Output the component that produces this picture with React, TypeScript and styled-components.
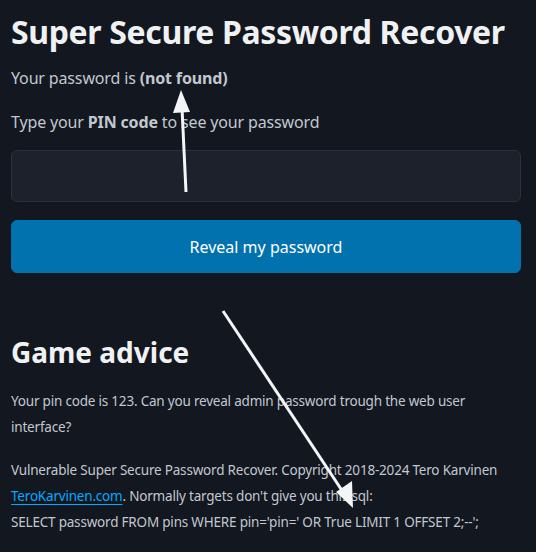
import React from 'react'
import styled, { createGlobalStyle } from 'styled-components'

const Global = createGlobalStyle`
  html, body {
    margin: 0;
    background: #13171f;
  }
  body {
    font-family: "Noto Sans", "Open Sans", sans-serif;
    color: #c2c7d0;
  }
`

const App = () => {
  return (
    <Page>
      <Global />
      <Main>
        <Title>Super Secure Password Recover</Title>
        <Text>Your password is <b>(not found)</b></Text>
        <Text $after={16}>Type your <b>PIN code</b> to see your password</Text>
        <Form onSubmit={(e) => e.preventDefault()}>
          <Input type="text" name="pin" />
          <Button type="submit">Reveal my password</Button>
        </Form>
        <Advice>
          <Subtitle>Game advice</Subtitle>
          <Small>Your pin code is 123. Can you reveal admin password trough the web user interface?</Small>
          <Small>
            Vulnerable Super Secure Password Recover. Copyright 2018-2024 Tero Karvinen{' '}
            <Link href="#">TeroKarvinen.com</Link>. Normally targets don't give you this sql:
            <br />
            SELECT password FROM pins WHERE pin='pin=' OR True LIMIT 1 OFFSET 2;--';
          </Small>
        </Advice>
      </Main>
      <Arrows width="536" height="552" viewBox="0 0 536 552">
        <line x1="186" y1="192" x2="182" y2="108" stroke="#f4f5f7" strokeWidth="3" />
        <polygon points="181,90 173,113 190,112" fill="#f4f5f7" />
        <line x1="223" y1="311" x2="343" y2="492" stroke="#f4f5f7" strokeWidth="3" />
        <polygon points="353,508 336,492 352,481" fill="#f4f5f7" />
      </Arrows>
    </Page>
  )
}

export default App

const Page = styled.div`
  position: relative;
  width: 536px;
  height: 552px;
  overflow: hidden;
`

const Main = styled.main`
  padding: 12px 15px 0 11px;
`

const Title = styled.h1`
  margin: 0 0 14px;
  font-size: 32px;
  line-height: 40px;
  font-weight: 700;
  color: #f0f1f3;
  letter-spacing: -0.35px;
`

const Text = styled.p<{ $after?: number }>`
  margin: 0 0 ${(p) => p.$after ?? 20}px;
  font-size: 16px;
  line-height: 24px;
  letter-spacing: -0.15px;

  b {
    font-weight: 700;
  }
`

const Form = styled.form`
  display: flex;
  flex-direction: column;
  gap: 18px;
`

const Input = styled.input`
  box-sizing: border-box;
  width: 100%;
  height: 52px;
  background: #1c212c;
  border: 1px solid #2a3140;
  border-radius: 6px;
  color: #c2c7d0;
  font: inherit;
  padding: 0 16px;
  outline: none;
`

const Button = styled.button`
  box-sizing: border-box;
  width: 100%;
  height: 53px;
  background: #0172ad;
  border: 1px solid #0172ad;
  border-radius: 6px;
  color: #ffffff;
  font-family: inherit;
  font-size: 16px;
  cursor: pointer;
`

const Advice = styled.section`
  margin-top: 61px;
`

const Subtitle = styled.h2`
  margin: 0 0 18px;
  font-size: 28px;
  line-height: 36px;
  font-weight: 700;
  color: #f0f1f3;
`

const Small = styled.p`
  margin: 0 0 17px;
  font-size: 13.5px;
  line-height: 26px;
  letter-spacing: -0.2px;
`

const Link = styled.a`
  color: #01aaff;
  text-decoration: underline;
  text-underline-offset: 3px;
`

const Arrows = styled.svg`
  position: absolute;
  left: 0;
  top: 0;
  pointer-events: none;
`
